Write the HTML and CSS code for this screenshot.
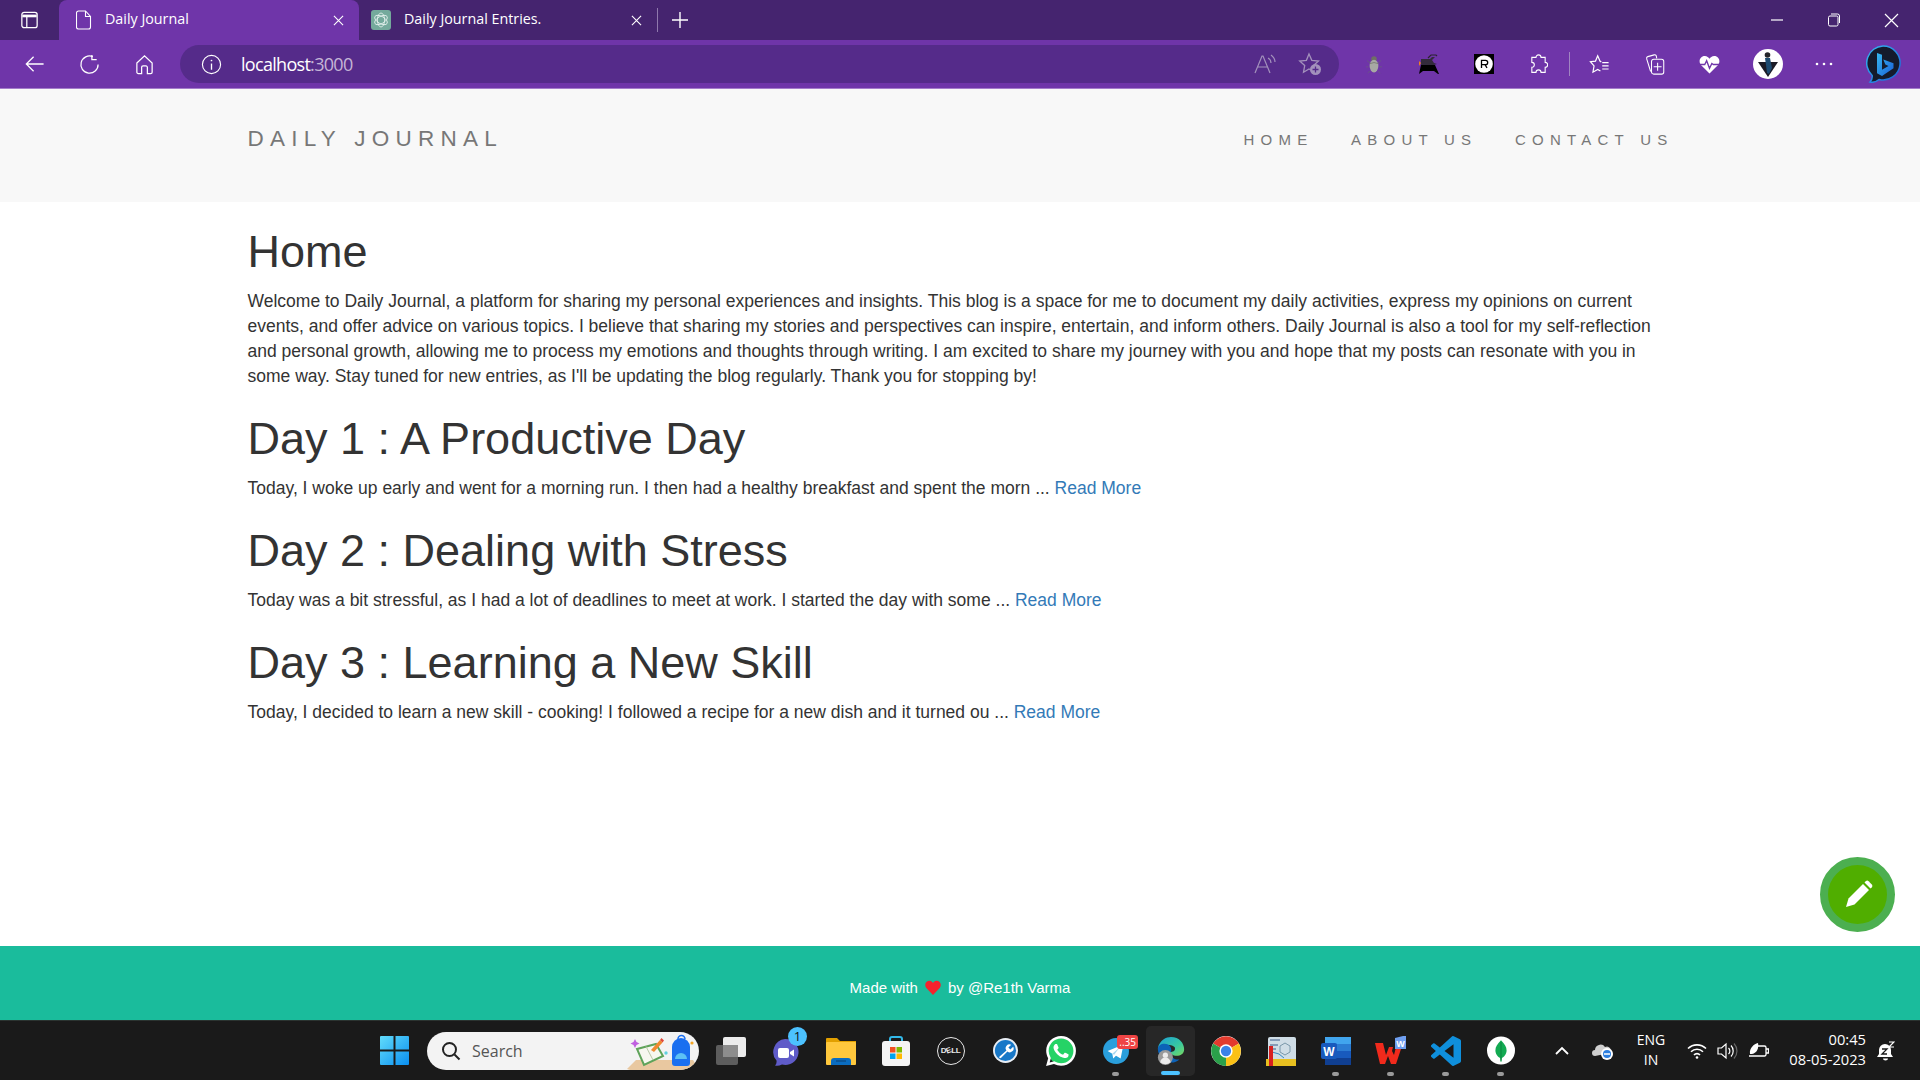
FILE: index.html
```html
<!DOCTYPE html>
<html lang="en">
<head>
<meta charset="utf-8">
<title>Daily Journal</title>
<link rel="stylesheet" href="styles.css">
</head>
<body>
<div class="screen">
  <header class="browser">
    <div class="tabbar">
      <div class="tab-side"><svg width="19" height="18" viewBox="0 0 20 20" fill="none" stroke="#fff" stroke-width="1.4"><rect x="1.500" y="1.500" width="17" height="17" rx="2.500"/><path d="M2 5.500h16" stroke-width="3"/><path d="M7 5v13"/></svg></div>
      <div class="tab tab-active">
        <svg class="tab-icon" width="16" height="20" viewBox="0 0 16 20" fill="none" stroke="#fff" stroke-width="1.1"><path d="M2.5 1h7l5 5.5v10.5a2 2 0 0 1-2 2h-10a2 2 0 0 1-2-2v-14a2 2 0 0 1 2-2z"/><path d="M9.5 1v5.5h5"/></svg>
        <span class="tab-title">Daily Journal</span>
        <svg class="tab-close" width="11" height="11" viewBox="0 0 12 12" stroke="#fff" stroke-width="1.2"><path d="M1 1l10 10M11 1L1 11"/></svg>
      </div>
      <div class="tab tab-second">
        <svg class="tab-icon" width="20" height="20" viewBox="0 0 20 20"><rect width="20" height="20" rx="3" fill="#74aa9c"/><g fill="none" stroke="#eaf4f1" stroke-width=".8"><ellipse cx="10" cy="10" rx="7" ry="3.6" transform="rotate(30 10 10)"/><ellipse cx="10" cy="10" rx="7" ry="3.6" transform="rotate(90 10 10)"/><ellipse cx="10" cy="10" rx="7" ry="3.6" transform="rotate(150 10 10)"/></g></svg>
        <span class="tab-title">Daily Journal Entries.</span>
        <svg class="tab-close" width="11" height="11" viewBox="0 0 12 12" stroke="#fff" stroke-width="1.2"><path d="M1 1l10 10M11 1L1 11"/></svg>
      </div>
      <div class="tab-sep"></div>
      <div class="tab-new"><svg width="18" height="18" viewBox="0 0 18 18" stroke="#fff" stroke-width="1.4"><path d="M9 1v16M1 9h16"/></svg></div>
      <div class="win-controls">
        <div class="win-btn"><svg width="14" height="14" viewBox="0 0 14 14" stroke="#fff" stroke-width="1.2"><path d="M1 7h12"/></svg></div>
        <div class="win-btn"><svg width="14" height="14" viewBox="0 0 14 14" fill="none" stroke="#fff" stroke-width="1"><rect x="1.500" y="3" width="9.500" height="10" rx="1.500"/><path d="M4 1h6.500a2 2 0 0 1 2 2v7"/></svg></div>
        <div class="win-btn win-close"><svg width="15" height="15" viewBox="0 0 15 15" stroke="#fff" stroke-width="1.2"><path d="M1 1l13 13M14 1l-13 13"/></svg></div>
      </div>
    </div>
    <div class="toolbar">
      <div class="tool"><svg width="21" height="20" viewBox="0 0 22 22" fill="none" stroke="#fff" stroke-width="1.400"><path d="M21 11H2M10 3l-8 8 8 8"/></svg></div>
      <div class="tool"><svg width="21" height="21" viewBox="0 0 22 22" fill="none" stroke="#fff" stroke-width="1.300"><path d="M14.500 2.800a9 9 0 1 0 5.500 8.200"/><path d="M13.500 1v5h5"/></svg></div>
      <div class="tool"><svg width="21" height="21" viewBox="0 0 22 22" fill="none" stroke="#fff" stroke-width="1.300"><path d="M3 9.500L11 2l8 7.500V19a1.500 1.500 0 0 1-1.500 1.500H14V14a1.500 1.500 0 0 0-1.500-1.500h-3A1.500 1.500 0 0 0 8 14v6.500H4.500A1.500 1.500 0 0 1 3 19z"/></svg></div>
      <div class="address">
        <svg class="addr-info" width="21" height="21" viewBox="0 0 22 22" fill="none" stroke="#fff" stroke-width="1.200"><circle cx="11" cy="11" r="9.500"/><path d="M11 10v6.500" stroke-width="1.400"/><circle cx="11" cy="6.800" r=".9" fill="#fff" stroke="none"/></svg>
        <span class="addr-url">localhost<span class="addr-port">:3000</span></span>
        <svg class="addr-action" width="24" height="24" viewBox="0 0 24 24" fill="none" stroke="#a391bc" stroke-width="1.200"><path d="M2 21L9 4h1l7 17M5 15h10"/><path d="M15 6q3 1.500 3 5M18 3q4 3 4 7"/></svg>
        <svg class="addr-action" width="24" height="24" viewBox="0 0 24 24" fill="none" stroke="#a391bc" stroke-width="1.300"><path d="M11 2l2.800 6.300 6.700.7-5 4.600 1 6.400-5.500-3.100-5.500 3.400 1.200-6.700-5-4.600 6.700-.7z"/><circle cx="17.500" cy="17.500" r="5.500" fill="#a391bc" stroke="none"/><path d="M17.500 14.500v6M14.500 17.500h6" stroke="#552b8a" stroke-width="1.300"/></svg>
      </div>
      <div class="ext-group">
        <div class="tool"><svg width="18" height="19" viewBox="0 0 20 24"><path d="M5 10L1 7M15 10l4-3M3 15H0M17 15h3M5 20l-3 3M15 20l3 3" stroke="#6b5a80" stroke-width="1"/><ellipse cx="10" cy="5" rx="3.500" ry="3.500" fill="#6f6f64"/><ellipse cx="10" cy="14" rx="5.500" ry="8" fill="#a8a8a4"/><path d="M4.500 11q5.500-3 11 0" fill="none" stroke="#76766e"/></svg></div>
        <div class="tool"><svg width="20" height="20" viewBox="0 0 20 20"><path d="M2 5h9l2-2h3l-3 3 2 3 3 1-3 1H2z" fill="#332b3c"/><path d="M9 4l3-3h5l1 1" fill="none" stroke="#2b2430" stroke-width="1.200"/><path d="M2 11h14l4 9h-1l-4-3H4l-4 3z" fill="#000"/><path d="M0 7l2 2-2 3z" fill="#f08020"/></svg></div>
        <div class="tool"><svg width="20" height="20" viewBox="0 0 20 20"><rect width="20" height="20" fill="#000"/><circle cx="10" cy="10" r="8.800" fill="#fff"/><path d="M7.500 14V6.300h4a2.200 2.200 0 0 1 0 4.400h-4M11 10.700L13 14" fill="none" stroke="#000" stroke-width="1.300"/></svg></div>
        <div class="tool"><svg width="19" height="20" viewBox="0 0 22 24" fill="none" stroke="#fff" stroke-width="1.300"><path d="M8 4a3 3 0 0 1 6 0h5v6a3 3 0 0 1 0 6v6h-5a3 3 0 0 0-6 0H3v-6a3 3 0 0 0 0-6V4z"/></svg></div>
        <div class="tool-sep"></div>
        <div class="tool tool-fav"><svg width="21" height="20" viewBox="0 0 22 22" fill="none" stroke="#fff" stroke-width="1.300"><path d="M13 8.800l-1.500-1L9 2 6.600 7.800 1 8.500 5 13l-1.200 7L9 17l3 1.800"/><path d="M14 9.500h7M14 13h7M14 16.500h7"/></svg></div>
        <div class="tool"><svg width="20" height="21" viewBox="0 0 22 24" fill="none" stroke="#fff" stroke-width="1.200"><path d="M6 20L1.500 5.500a2 2 0 0 1 1.300-2.500L10 1a2 2 0 0 1 2.500 1.500L13 5"/><rect x="7" y="6" width="14" height="17" rx="2.500"/><path d="M14 10v9M9.500 14.500h9"/></svg></div>
        <div class="tool"><svg width="21" height="19" viewBox="0 0 22 20"><path d="M11 19.500L2 10.500C-1 7 1 1 6 1c2.500 0 4 1.500 5 3 1-1.500 2.500-3 5-3 5 0 7 6 4 9.500z" fill="#fff"/><path d="M0 10h6l2-4 3 8 2.500-5 1.500 1h7" fill="none" stroke="#6f35a9" stroke-width="1.400"/></svg></div>
        <div class="tool tool-avatar"><svg width="30" height="30" viewBox="0 0 30 30"><circle cx="15" cy="15" r="15" fill="#fff"/><path d="M5 13h20l-10 15z" fill="#1b1b26"/><path d="M12 9h5l2 10-3 6-2-1-1-8z" fill="#1d4a70"/><circle cx="14.500" cy="6" r="2.800" fill="#24242a"/></svg></div>
        <div class="tool tool-more"><svg width="18" height="4" viewBox="0 0 18 4" fill="#fff"><circle cx="2" cy="2" r="1.300"/><circle cx="9" cy="2" r="1.300"/><circle cx="16" cy="2" r="1.300"/></svg></div>
        <div class="tool tool-bing"><svg width="38" height="38" viewBox="0 0 38 38"><defs><linearGradient id="bg1" x1="0" y1="0" x2="1" y2="1"><stop offset="0" stop-color="#36b8f0"/><stop offset="1" stop-color="#1a60d8"/></linearGradient></defs><path d="M19 1a17 17 0 1 1-4 33.500c-3 2.500-7 3-9 2.500 1.500-1.500 2.500-4 2.200-6.500A17 17 0 0 1 19 1z" fill="#141b2c" stroke="url(#bg1)" stroke-width="1.500"/><path d="M13 8l5 1.800v15l6.500-3.700-3.200-1.500-2-5 10.200 3.600v5L18 31l-5-2.800z" fill="url(#bg1)"/></svg></div>
      </div>
    </div>
  </header>

  <div class="site">
    <nav class="navbar">
      <div class="container nav-inner">
        <a class="brand">DAILY JOURNAL</a>
        <ul class="nav-links">
          <li>HOME</li>
          <li>ABOUT US</li>
          <li>CONTACT US</li>
        </ul>
      </div>
    </nav>
    <main class="container content">
      <h1>Home</h1>
      <p>Welcome to Daily Journal, a platform for sharing my personal experiences and insights. This blog is a space for me to document my daily activities, express my opinions on current events, and offer advice on various topics. I believe that sharing my stories and perspectives can inspire, entertain, and inform others. Daily Journal is also a tool for my self-reflection and personal growth, allowing me to process my emotions and thoughts through writing. I am excited to share my journey with you and hope that my posts can resonate with you in some way. Stay tuned for new entries, as I'll be updating the blog regularly. Thank you for stopping by!</p>
      <h1>Day 1 : A Productive Day</h1>
      <p>Today, I woke up early and went for a morning run. I then had a healthy breakfast and spent the morn ... <a class="more">Read More</a></p>
      <h1>Day 2 : Dealing with Stress</h1>
      <p>Today was a bit stressful, as I had a lot of deadlines to meet at work. I started the day with some ... <a class="more">Read More</a></p>
      <h1>Day 3 : Learning a New Skill</h1>
      <p>Today, I decided to learn a new skill - cooking! I followed a recipe for a new dish and it turned ou ... <a class="more">Read More</a></p>
    </main>
    <a class="fab"><svg width="36" height="36" viewBox="0 0 36 36" fill="#fff"><path d="M6 30l2.500-8.500L23 7l6 6-14.500 14.500z"/><path d="M24.500 5.500l1.300-1.300a2 2 0 0 1 2.800 0l3.200 3.200a2 2 0 0 1 0 2.800L30.500 11.500z"/></svg></a>
    <footer class="footer">
      <span>Made with</span>
      <svg class="heart" width="16" height="15" viewBox="0 0 16 15"><path d="M8 15L1.300 8C-.8 5.500.2 1 4 .7 6 .5 7.300 1.700 8 3c.7-1.300 2-2.500 4-2.300 3.800.3 4.800 4.800 2.700 7.300z" fill="#f5222d"/></svg>
      <span>by @Re1th Varma</span>
    </footer>
  </div>

  <div class="taskbar">
    <div class="task-cell"><svg width="29" height="29" viewBox="0 0 29 29"><defs><linearGradient id="wn" x1="0" y1="0" x2="1" y2="1"><stop offset="0" stop-color="#62dcfb"/><stop offset="1" stop-color="#0a8ff0"/></linearGradient></defs><path fill="url(#wn)" d="M0 1a1 1 0 0 1 1-1h12.500v13.500H0zM15.500 0H28a1 1 0 0 1 1 1v12.500H15.500zM0 15.500h13.500V29H1a1 1 0 0 1-1-1zM15.500 15.500H29V28a1 1 0 0 1-1 1H15.500z"/></svg></div>
    <div class="search">
      <svg width="20" height="20" viewBox="0 0 20 20" fill="none" stroke="#222" stroke-width="2"><circle cx="8.500" cy="8.500" r="6.500"/><path d="M13.500 13.500L18.500 18.500"/></svg>
      <span class="search-text">Search</span>
      <svg class="search-art" width="68" height="38" viewBox="0 0 68 38"><path d="M0 37L9 28h57l2 3-7 7H3z" fill="#e9c8a0"/><path d="M10 17L29 12 36 24 17 33z" fill="#f7f7f0" stroke="#5fa35a" stroke-width="2"/><path d="M19 14.500L26 28" stroke="#b8c8a8"/><path d="M24 18L33 8l2.500 2.500L27 20z" fill="#f08a30"/><path d="M33 8l1.500-2 2.500 2.500-1.500 2z" fill="#e0483a"/><path d="M8 7l1.500 3 3 1.500-3 1.500L8 16l-1.500-3-3-1.500 3-1.500z" fill="#c060e0"/><circle cx="39" cy="21" r="1.700" fill="#60d0e0"/><path d="M51 7a3.500 3.500 0 0 1 7 0" fill="none" stroke="#1a6ff0" stroke-width="1.500"/><path d="M45 31V15a9 9 0 0 1 18 0v16a3 3 0 0 1-3 3H48a3 3 0 0 1-3-3z" fill="#1a6ff0"/><path d="M48 27a6 6 0 0 1 12 0z" fill="#5cc0f5"/><circle cx="65" cy="11" r="1.600" fill="#f5a623"/></svg>
    </div>
    <div class="task-icons">
      <div class="task-cell"><svg width="30" height="28" viewBox="0 0 30 28"><rect y="8" width="22" height="20" rx="2" fill="#5d5d5d"/><rect x="7" width="23" height="20" rx="2" fill="#ececec"/><rect x="7" y="8" width="15" height="12" fill="#8d8d8d"/></svg></div>
      <div class="task-cell"><svg width="30" height="30" viewBox="0 0 30 30"><path d="M14 3a13 13 0 1 1-3 25.500q-4 2-7 1 2-2 1.500-5A13 13 0 0 1 14 3z" fill="#5f5bc8"/><rect x="7" y="12" width="11" height="10" rx="2" fill="#fff"/><path d="M19 16l4-2.500v7L19 18z" fill="#fff"/></svg><span class="badge-teams">1</span></div>
      <div class="task-cell"><svg width="30" height="28" viewBox="0 0 30 28"><path d="M0 2a1 1 0 0 1 1-1h10l3 3h16v4H0z" fill="#e2a000"/><rect y="5" width="30" height="23" rx="1" fill="#ffc83d"/><path d="M5 28v-4a3 3 0 0 1 3-3h14a3 3 0 0 1 3 3v4z" fill="#0a6cc0"/><path d="M10 24h10" stroke="#0a3e70"/></svg></div>
      <div class="task-cell"><svg width="28" height="30" viewBox="0 0 28 30"><path d="M8 6V3a2 2 0 0 1 2-2h8a2 2 0 0 1 2 2v3" fill="none" stroke="#32b8e8" stroke-width="2"/><rect y="5" width="28" height="25" rx="3" fill="#f4f4f4"/><rect x="8" y="11" width="5.500" height="5.500" fill="#f25022"/><rect x="14.500" y="11" width="5.500" height="5.500" fill="#7fba00"/><rect x="8" y="17.500" width="5.500" height="5.500" fill="#00a4ef"/><rect x="14.500" y="17.500" width="5.500" height="5.500" fill="#ffb900"/></svg></div>
      <div class="task-cell"><div class="dell">D<span class="dell-e">E</span>LL</div></div>
      <div class="task-cell"><svg width="25" height="25" viewBox="0 0 26 26"><circle cx="13" cy="13" r="13" fill="#e8eef5"/><circle cx="13" cy="13" r="11" fill="#1878c8"/><path d="M6 20l8-7a4 4 0 0 1 5-6l-3 3 2 2 3-3a4 4 0 0 1-6 5l-7 7z" fill="#fff"/></svg></div>
      <div class="task-cell"><svg width="30" height="30" viewBox="0 0 24 24"><circle cx="12" cy="12" r="10.500" fill="#25d366"/><path fill="#fff" d="M17.472 14.382c-.297-.149-1.758-.867-2.030-.967-.273-.099-.471-.148-.670.150-.197.297-.767.966-.940 1.164-.173.199-.347.223-.644.075-.297-.150-1.255-.463-2.390-1.475-.883-.788-1.480-1.761-1.653-2.059-.173-.297-.018-.458.130-.606.134-.133.298-.347.446-.520.149-.174.198-.298.298-.497.099-.198.050-.371-.025-.520-.075-.149-.669-1.612-.916-2.207-.242-.579-.487-.500-.669-.510-.173-.008-.371-.010-.570-.010-.198 0-.520.074-.792.372-.272.297-1.040 1.016-1.040 2.479 0 1.462 1.065 2.875 1.213 3.074.149.198 2.096 3.200 5.077 4.487.709.306 1.262.489 1.694.625.712.227 1.360.195 1.871.118.571-.085 1.758-.719 2.006-1.413.248-.694.248-1.289.173-1.413-.074-.124-.272-.198-.570-.347m3-10.885A11.815 11.815 0 0012.050 0C5.495 0 .160 5.335.157 11.892c0 2.096.547 4.142 1.588 5.945L.057 24l6.305-1.654a11.882 11.882 0 005.683 1.448h.005c6.554 0 11.890-5.335 11.893-11.893a11.821 11.821 0 00-3.480-8.413zM12.051 21.785h-.004a9.870 9.870 0 01-5.031-1.378l-.361-.214-3.741.982.998-3.648-.235-.374a9.860 9.860 0 01-1.510-5.260c.001-5.450 4.436-9.884 9.888-9.884 2.640 0 5.122 1.030 6.988 2.898a9.825 9.825 0 012.893 6.994c-.003 5.450-4.437 9.884-9.885 9.884z"/></svg></div>
      <div class="task-cell task-run"><svg width="26" height="26" viewBox="0 0 28 28"><circle cx="14" cy="14" r="14" fill="#2a9fdc"/><path d="M5 14l17-7-3 15-5-3-3 3-1-5z" fill="#fff"/><path d="M10 17l8-7-6 8z" fill="#a9d8f0"/></svg><span class="badge-tg">..35</span></div>
      <div class="task-cell task-active"><svg width="30" height="30" viewBox="0 0 30 32"><defs><linearGradient id="ed" x1="0" y1="0" x2="1" y2="1"><stop offset="0" stop-color="#1a9fd8"/><stop offset=".6" stop-color="#38c8a0"/><stop offset="1" stop-color="#7ad860"/></linearGradient></defs><path d="M1 13C3 4 10 1 15 1c9 0 14 7 14 13 0 5-4 7-8 7-4 0-7-2-6-4 3 0 5-2 4-5-2-3-9-4-14 1-2 2-3 3-4 0z" fill="url(#ed)"/><path d="M1 14c0-5 6-7 11-5 3 2 4 5 3 8-1 4 3 9 9 8-5 5-14 4-18-1C3 21 1 18 1 14z" fill="#0c62b8"/><circle cx="9" cy="23" r="8" fill="#9a9a9a"/><circle cx="9" cy="20.500" r="2.800" fill="#ececec"/><path d="M3.500 28a5.500 5 0 0 1 11 0 8 8 0 0 1-11 0z" fill="#ececec"/></svg></div>
      <div class="task-cell"><svg width="30" height="30" viewBox="0 0 28 28"><circle cx="14" cy="14" r="14" fill="#fff"/><path d="M14 14L2 7A14 14 0 0 1 26 7z" fill="#e33b2e"/><path d="M14 14L26 7A14 14 0 0 1 14 28z" fill="#fbc116"/><path d="M14 14L14 28A14 14 0 0 1 2 7z" fill="#2aa04a"/><circle cx="14" cy="14" r="6.200" fill="#fff"/><circle cx="14" cy="14" r="4.800" fill="#3b82e8"/></svg></div>
      <div class="task-cell"><svg width="30" height="30" viewBox="0 0 30 30"><rect x="2" y="1" width="28" height="24" rx="2" fill="#cfdde6"/><path d="M19 7l5 3v6l-5 3-5-3v-6z" fill="none" stroke="#7a98aa"/><path d="M4 4h10M4 9h8M4 13h6" stroke="#3a5a8a"/><path d="M6 16l7 2 5 4" fill="none" stroke="#3a8ac0"/><rect y="23" width="30" height="7" fill="#e8c020"/><path d="M3 10h4v14H3z" fill="#d82020"/><path d="M3 24h4v6H3z" fill="#d82020"/></svg></div>
      <div class="task-cell task-run"><svg width="30" height="28" viewBox="0 0 30 28"><rect x="4" width="26" height="28" rx="2" fill="#2b7cd3"/><rect x="4" width="26" height="7" fill="#41a5ee"/><rect x="4" y="14" width="26" height="7" fill="#185abd"/><rect x="4" y="21" width="26" height="7" fill="#103f91"/><rect y="6" width="16" height="16" rx="2" fill="#185abd"/><text class="word-w" x="8" y="18.500" text-anchor="middle">W</text></svg></div>
      <div class="task-cell task-run"><svg width="32" height="32" viewBox="0 0 32 32"><path d="M0 8h8l3 12 3-8h4l-1 4 2 4 3-12h6l-7 21h-5l-3-8-3 8H5z" fill="#f12a1c"/><path d="M20 3l8-2h3v13h-11z" fill="#6f9ff0"/><text class="wps-w" x="25.500" y="12" text-anchor="middle">W</text></svg></div>
      <div class="task-cell task-run"><svg width="30" height="30" viewBox="0 0 24 24"><path fill="#0f8fdc" d="M23.150 2.587L18.210.21a1.494 1.494 0 0 0-1.705.29l-9.460 8.630-4.120-3.128a.999.999 0 0 0-1.276.057L.327 7.261A1 1 0 0 0 .326 8.740L3.899 12 .326 15.260a1 1 0 0 0 .001 1.479L1.650 17.940a.999.999 0 0 0 1.276.057l4.120-3.128 9.460 8.630a1.492 1.492 0 0 0 1.704.290l4.942-2.377A1.500 1.500 0 0 0 24 20.060V3.939a1.500 1.500 0 0 0-.85-1.352zm-5.146 14.861L10.826 12l7.178-5.448v10.896z"/></svg></div>
      <div class="task-cell task-run"><svg width="28" height="29" viewBox="0 0 30 30"><circle cx="15" cy="15" r="15" fill="#fff"/><path d="M15 4c4 4 6 7 6 11 0 4-3 7-5 8l-.5 4h-1l-.5-4c-2-1-5-4-5-8 0-4 2-7 6-11z" fill="#13aa52"/><path d="M15 6v20" stroke="#0b7a3a" stroke-width=".8"/></svg></div>
    </div>
    <div class="tray">
      <div class="tray-chevron"><svg width="14" height="9" viewBox="0 0 14 9" fill="none" stroke="#fff" stroke-width="1.800"><path d="M1 8l6-6 6 6"/></svg></div>
      <div class="tray-cloud"><svg width="22" height="18" viewBox="0 0 22 18"><path d="M3 14a3 3 0 0 1 0-6 5.500 5.500 0 0 1 10-3 4 4 0 0 1 5 6z" fill="#cfcfcf"/><circle cx="15" cy="12" r="6" fill="#fff"/><circle cx="15" cy="12" r="4" fill="#2d7fe0"/><path d="M12 12h6" stroke="#fff" stroke-width="1.500"/></svg></div>
      <div class="tray-lang"><span>ENG</span><span>IN</span></div>
      <div class="tray-wifi"><svg width="20" height="16" viewBox="0 0 20 16" fill="none" stroke="#fff" stroke-width="1.600"><path d="M1 5.500a13 13 0 0 1 18 0M4 8.800a8.500 8.500 0 0 1 12 0M7 12a4 4 0 0 1 6 0"/><circle cx="10" cy="14.500" r="1.300" fill="#fff" stroke="none"/></svg></div>
      <div class="tray-vol"><svg width="21" height="18" viewBox="0 0 21 18" fill="none" stroke="#fff" stroke-width="1.200"><path d="M1 6h3.500L9 2v14l-4.500-4H1z"/><path d="M11.500 6a4 4 0 0 1 0 6M14 3.500a8 8 0 0 1 0 11"/><path d="M17 1.500a11 11 0 0 1 0 15" stroke="#666"/></svg></div>
      <div class="tray-batt"><svg width="21" height="18" viewBox="0 0 21 18" fill="none" stroke="#fff" stroke-width="1.300"><path d="M9 4h7.500a1.500 1.500 0 0 1 1.500 1.500v7a1.500 1.500 0 0 1-1.500 1.500H1M18 7h2.500v4H18"/><path d="M2 12C1 6 6 2 10 1c1 5-1 10-6 11z" fill="#fff" stroke="none"/></svg></div>
      <div class="tray-clock"><span>00:45</span><span>08-05-2023</span></div>
      <div class="tray-bell"><svg width="18" height="20" viewBox="0 0 18 20"><path d="M8 3a6 6 0 0 0-6 6v4l-2 3h16l-2-3V9a6 6 0 0 0-6-6z" fill="#fff"/><path d="M6 17.500a2.500 2 0 0 0 5 0z" fill="#fff"/><path d="M5 8h5L5 13h5" fill="none" stroke="#1a1a1a" stroke-width="1.300"/><path d="M12 1h5l-5 5h5" fill="none" stroke="#fff" stroke-width="1.200"/></svg></div>
    </div>
  </div>
</div>
</body>
</html>
```
FILE: styles.css
```css
* { box-sizing: border-box; }
html, body { margin: 0; padding: 0; height: 100%; overflow: hidden; }
body { font-family: "Liberation Sans", Arial, sans-serif; color: #333; background: #fff; }
.screen { display: flex; flex-direction: column; height: 1080px; }

/* browser chrome */
.browser { flex: none; font-family: "Open Sans", "Noto Sans", sans-serif; color: #fff; }
.tabbar { height: 40px; background: #45246f; display: flex; align-items: stretch; }
.tab-side { width: 59px; display: flex; align-items: center; justify-content: center; }
.tab { width: 300px; display: flex; align-items: center; padding: 0 15px 0 12px; }
.tab-second { width: 298px; }
.tab-active { background: #6f35a9; border-top-left-radius: 8px; border-top-right-radius: 8px; padding-left: 17px; }
.tab-title { flex: 1; font-size: 14.3px; line-height: 18px; margin: 0 0 2px 13px; white-space: nowrap; }
.tab-close { flex: none; }
.tab-sep { width: 1px; height: 24px; background: #8f78ad; margin: 8px 0 0; }
.tab-new { width: 43px; display: flex; align-items: center; justify-content: center; }
.win-controls { margin-left: auto; display: flex; }
.win-btn { width: 57px; display: flex; align-items: center; justify-content: center; }
.win-close { width: 58px; }

.toolbar { height: 49px; background: #6f35a9; border-bottom: 1px solid #a47cca; padding-left: 7px; display: flex; align-items: center; }
.tool { flex: none; width: 55px; height: 48px; display: flex; align-items: center; justify-content: center; }
.address { flex: none; width: 1159px; height: 38px; margin-left: 8px; background: #552b8a; border-radius: 19px; display: flex; align-items: center; padding: 0 17px 0 21px; }
.addr-info { flex: none; }
.addr-url { flex: 1; margin-left: 19px; font-size: 18px; letter-spacing: -.7px; }
.addr-port { color: #c4b5d6; }
.addr-action { flex: none; margin-left: 21px; }
.ext-group { display: flex; align-items: center; margin-left: 7px; }
.tool-sep { flex: none; width: 1px; height: 24px; background: #a185c2; margin-left: 3px; margin-right: -1px; }
.tool-fav { margin-left: 3px; }
.tool-avatar { width: 61px; }
.tool-more { width: 52px; }
.tool-bing { width: 65px; }

/* page */
.site { flex: 1; display: flex; flex-direction: column; position: relative; min-height: 0; }
.container { width: 1462px; margin: 0 auto; padding: 0 18.5px; }
.navbar { flex: none; height: 113px; background: #f8f8f8; }
.nav-inner { height: 100%; display: flex; justify-content: space-between; align-items: flex-start; }
.brand { font-size: 22.5px; letter-spacing: 6.25px; color: #777; margin-top: 36px; line-height: 28px; }
.nav-links { list-style: none; margin: 40px 0 0; padding: 0; display: flex; gap: 37.5px; }
.nav-links li { font-size: 15px; letter-spacing: 6.25px; color: #777; line-height: 22px; }
.nav-links li:last-child { margin-right: -1px; }
.content { flex: 1; padding-top: 25px; }
h1 { font-size: 45px; font-weight: 500; line-height: 49.5px; margin: 25px 0 12.5px; color: #333; }
h1:first-child { margin-top: 0; }
p { font-size: 17.5px; line-height: 25px; margin: 0 0 12.5px; color: #333; }
.more { color: #337ab7; }
.footer { flex: none; height: 74px; background: #1abc9c; display: flex; align-items: center; justify-content: center; gap: 7px; color: #fff; font-size: 15px; padding-top: 8px; }
.heart { flex: none; }
.fab { position: absolute; right: 25px; bottom: 88px; width: 75px; height: 75px; border-radius: 50%; background: #50ae00; border: 8px solid #4caf50; display: flex; align-items: center; justify-content: center; }

/* taskbar */
.taskbar { flex: none; height: 60px; background: #1a1a1a; border-top: 1px solid #2b3330; display: flex; align-items: center; padding-left: 367px; font-family: "Open Sans", "Noto Sans", sans-serif; color: #fff; }
.task-cell { flex: none; width: 55px; height: 50px; display: flex; align-items: center; justify-content: center; position: relative; }
.search { flex: none; width: 272px; height: 38px; margin: 0 4px 0 5px; background: #f3f3f3; border-radius: 19px; display: flex; align-items: center; padding-left: 14px; overflow: hidden; }
.search-text { flex: 1; margin-left: 11px; font-size: 16px; color: #555; }
.search-art { flex: none; margin-right: 4px; }
.task-icons { display: flex; }
.task-run::after { content: ""; position: absolute; left: 24px; bottom: 0; width: 7px; height: 4px; border-radius: 2px; background: #9a9a9a; }
.task-active { background: #272727; border-radius: 5px; margin: 0 3px; width: 49px; }
.task-active::after { content: ""; position: absolute; left: 15px; bottom: 1px; width: 19px; height: 4px; border-radius: 2px; background: #4cc2ff; }
.badge-teams { position: absolute; right: 6px; top: 1px; width: 19px; height: 19px; border-radius: 50%; background: #4cc2ff; color: #111; font-size: 13px; line-height: 19px; text-align: center; }
.badge-tg { position: absolute; right: 5px; top: 9px; height: 14px; padding: 0 2px; background: #ef4444; border-radius: 3px; color: #fff; font-size: 10px; line-height: 14px; }
.dell { width: 28px; height: 28px; border: 1.5px solid #e8e8e8; border-radius: 50%; font-family: "Liberation Sans", sans-serif; font-size: 8px; font-weight: 700; letter-spacing: -.3px; color: #e8e8e8; display: flex; align-items: center; justify-content: center; }
.dell-e { display: inline-block; transform: rotate(-20deg); }
.word-w { fill: #fff; font-family: "Liberation Sans", sans-serif; font-size: 12px; font-weight: 700; }
.wps-w { fill: #fff; font-family: "Liberation Sans", sans-serif; font-size: 9px; font-weight: 700; }
.tray { margin-left: auto; display: flex; align-items: center; height: 100%; padding-right: 14px; }
.tray > div { flex: none; display: flex; align-items: center; justify-content: center; }
.tray-chevron { width: 30px; }
.tray-cloud { width: 52px; }
.tray-lang { width: 44px; margin-right: 5px; flex-direction: column; font-size: 14px; line-height: 20px; padding-bottom: 1px; }
.tray-wifi { width: 38px; }
.tray-vol { width: 22px; }
.tray-batt { width: 40px; }
.tray > .tray-clock { width: 88px; flex-direction: column; align-items: flex-end; font-size: 14.7px; line-height: 19.5px; white-space: nowrap; padding-bottom: 2px; }
.tray-bell { width: 40px; }
```
